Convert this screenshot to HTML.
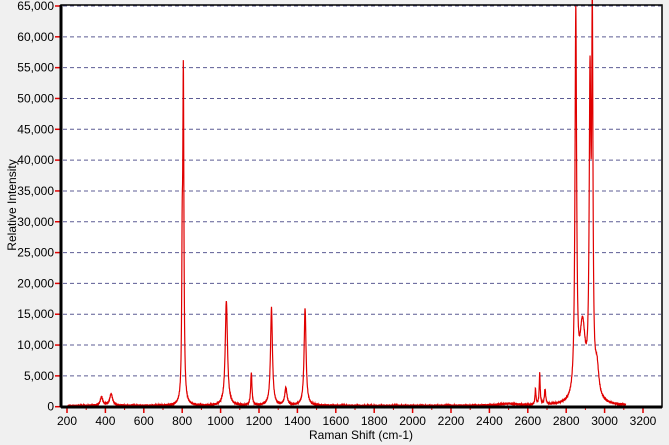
<!DOCTYPE html>
<html><head><meta charset="utf-8"><style>
html,body{margin:0;padding:0;background:#f0f0f0;width:669px;height:445px;overflow:hidden}
svg{display:block}
text{font-family:"Liberation Sans",Arial,sans-serif;font-size:12px;fill:#000}
</style></head><body>
<svg id="s" width="669" height="445" viewBox="0 0 669 445">
<rect x="61" y="5" width="601" height="402" fill="#fff"/>
<g id="grid" stroke="#5c5c94" stroke-width="1" stroke-dasharray="4,3"></g>
<g id="yl"></g><g id="xl"></g>
<path id="sp" fill="none" stroke="#e00000" stroke-width="1.2"/>
<rect x="61" y="5" width="601" height="402" fill="none" stroke="#000" stroke-width="1.5"/>
<line x1="61" y1="407" x2="662" y2="407" stroke="#000" stroke-width="3"/>
<line x1="61" y1="5" x2="61" y2="407" stroke="#000" stroke-width="3"/>
<text x="16" y="205" transform="rotate(-90 16 205)" text-anchor="middle" font-size="11">Relative Intensity</text>
<text x="361" y="439" text-anchor="middle" font-size="11">Raman Shift (cm-1)</text>
</svg>
<script>
var NS="http://www.w3.org/2000/svg";
function Y(v){return 406.7-v*400.7/65000}
function X(v){return 67+(v-200)*0.192}
function el(p,t,a,txt){var e=document.createElementNS(NS,t);for(var k in a)e.setAttribute(k,a[k]);if(txt!=null)e.textContent=txt;document.getElementById(p).appendChild(e);return e}
for(var i=0;i<=13;i++){var v=i*5000,y=Y(v);
 if(i>0)el("grid","line",{x1:63,x2:661,y1:y,y2:y});
 el("yl","line",{x1:55,x2:61,y1:y,y2:y,stroke:"#e00000","stroke-width":1.5});
 el("yl","text",{x:54,y:y+4,"text-anchor":"end"},v==0?"0":(v/1000)+",000");}
for(var v=200;v<=3200;v+=200){var x=X(v);
 el("xl","line",{x1:x,x2:x,y1:407,y2:413,stroke:"#e00000","stroke-width":1.5});
 el("xl","text",{x:x,y:425,"text-anchor":"middle"},String(v));}
for(var v=300;v<=3300;v+=200){var x=X(v);if(x<661)el("xl","line",{x1:x,x2:x,y1:407,y2:410,stroke:"#e00000","stroke-width":1});}
var P=[[380,1400,8],[430,1900,9],[800,20000,3],[806,52000,3.5],[1030,17000,7],[1160,5300,4],[1265,15800,6],[1340,2800,7],[1440,15800,6],
[2640,2500,3],[2662,5000,3],[2690,2400,4],[2850,62000,5],[2885,12000,18],[2924,48000,5],[2936,58000,4],[2960,5000,12],[2500,300,60]];
var d="";
for(var w=205;w<=3110;w+=0.8){var s=150;
 for(var j=0;j<P.length;j++){var q=(w-P[j][0])/P[j][2];s+=P[j][1]/(1+q*q);}
 s+=120*Math.sin(w*1.7)+80*Math.sin(w*3.1);if(s<0)s=0;
 d+=(d?"L":"M")+X(w).toFixed(2)+","+Y(s).toFixed(2);}
document.getElementById("sp").setAttribute("d",d);
</script>
</body></html>
